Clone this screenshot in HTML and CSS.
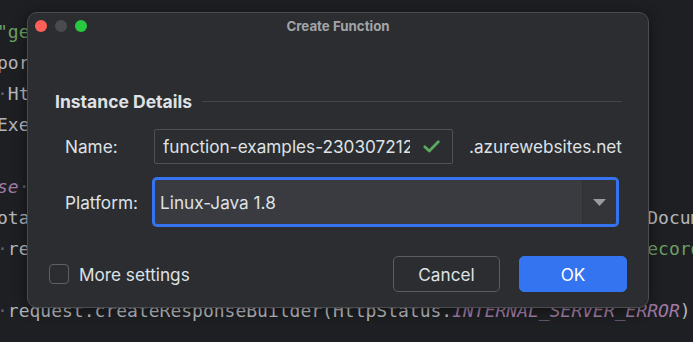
FILE: index.html
```html
<!DOCTYPE html>
<html lang="en">
<head>
<meta charset="utf-8">
<title>Create Function</title>
<link rel="stylesheet" href="styles.css">
</head>
<body>
<div class="editor">
<pre class="code"><span class="str">"get", "post"}, authLevel = AuthorizationLevel.ANONYMOUS)</span>
<span>portRequest&lt;Optional&lt;String&gt;&gt; request,</span>
<span class="ws">·</span><span>HttpRequestMessage&lt;Optional&lt;String&gt;&gt; message,</span>
<span>ExecutionContext context) {</span>

<span class="st">se</span><span class="ws">·</span><span>= false;</span>
<span>otation.process(request, context); final MyItems item = new Document(body);</span>
<span class="ws">·</span><span>request.getQueryParameters().getOrDefault(</span><span class="str">"contentType"</span><span>, </span><span class="str">"Record"</span><span>);</span>

<span class="ws">·</span><span>request.createResponseBuilder(HttpStatus.</span><span class="st">INTERNAL_SERVER_ERROR</span><span>)</span></pre>
</div>

<div class="dialog">
  <div class="titlebar">
    <div class="lights">
      <span class="light red"></span>
      <span class="light gray"></span>
      <span class="light green"></span>
    </div>
    <div class="title">Create Function</div>
  </div>
  <div class="body">
    <div class="section">
      <span class="section-title">Instance Details</span>
      <span class="section-line"></span>
    </div>
    <div class="form">
      <span class="label">Name:</span>
      <div class="name-row">
        <div class="input">
          <span class="input-text">function-examples-230307212</span>
          <svg class="check" width="17" height="13" viewBox="0 0 17 13"><path d="M1.8 6.8 L6.3 11 L15.3 1.8" fill="none" stroke="#5aa95f" stroke-width="2.8" stroke-linecap="round" stroke-linejoin="round"/></svg>
        </div>
        <span class="suffix">.azurewebsites.net</span>
      </div>
      <span class="label">Platform:</span>
      <div class="combo">
        <span class="combo-text">Linux-Java 1.8</span>
        <span class="combo-arrow"><svg width="13" height="7" viewBox="0 0 13 7"><path d="M0 0 H13 L6.5 7 Z" fill="#999ba0"/></svg></span>
      </div>
    </div>
    <div class="footer">
      <div class="more">
        <span class="box"></span>
        <span class="more-text">More settings</span>
      </div>
      <div class="buttons">
        <button class="btn">Cancel</button>
        <button class="btn primary">OK</button>
      </div>
    </div>
  </div>
</div>
</body>
</html>
```

FILE: styles.css
```css
html, body {
  margin: 0;
  padding: 0;
}
body {
  width: 693px;
  height: 342px;
  overflow: hidden;
  position: relative;
  background: #1e1f22;
  font-family: Inter, "Liberation Sans", sans-serif;
}
.editor {
  height: 100%;
  overflow: hidden;
}
.code {
  margin: 0 0 0 -3px;
  padding-top: 16px;
  font-family: "DejaVu Sans Mono", monospace;
  font-size: 18px;
  line-height: 31px;
  color: #b3b6bc;
  white-space: pre;
}
.code .str { color: #6b9f64; }
.code .st { color: #9f7aa3; font-style: italic; }
.code .ws { color: #5d6066; }

.dialog {
  position: absolute;
  left: 27px;
  top: 12px;
  width: 622px;
  height: 296px;
  box-sizing: border-box;
  border: 1px solid #4a4c50;
  border-radius: 10px;
  background: #2b2d30;
  box-shadow: 0 2px 14px rgba(0, 0, 0, 0.45);
  display: flex;
  flex-direction: column;
}
.titlebar {
  height: 26px;
  display: grid;
  grid-template-columns: 1fr auto 1fr;
  align-items: center;
}
.lights {
  display: flex;
  gap: 8px;
  padding-left: 7px;
}
.light {
  width: 12px;
  height: 12px;
  border-radius: 50%;
}
.red { background: #ff5f57; }
.gray { background: #4a4b4e; }
.green { background: #28c840; }
.title {
  font-size: 13.3px;
  font-weight: 700;
  color: #a3a4a8;
}
.body {
  flex: 1;
  display: flex;
  flex-direction: column;
  padding: 52px 21px 15px 21px;
}
.section {
  display: flex;
  align-items: center;
  gap: 10px;
  margin: 0 5px 0 6px;
  height: 20px;
}
.section-title {
  font-size: 17.5px;
  font-weight: 700;
  color: #dfe1e5;
  white-space: nowrap;
}
.section-line {
  flex: 1;
  height: 1px;
  background: #44464a;
}
.form {
  margin: 18px 0 0 16px;
  display: grid;
  grid-template-columns: 89px auto;
  row-gap: 15px;
  align-items: center;
  color: #dfe1e5;
  font-size: 17.2px;
}
.label {
  white-space: nowrap;
}
.name-row {
  display: flex;
  align-items: center;
}
.input {
  width: 299px;
  height: 35px;
  box-sizing: border-box;
  border: 1px solid #4e5157;
  border-radius: 2px;
  display: flex;
  align-items: center;
  padding-left: 8px;
}
.input-text {
  flex: 1;
  overflow: hidden;
  white-space: nowrap;
}
.check {
  margin: 0 12px 0 13px;
  flex: none;
}
.suffix {
  margin-left: 16px;
  white-space: nowrap;
}
.combo {
  width: 463px;
  height: 46px;
  box-sizing: border-box;
  border: 1px solid #3574f0;
  box-shadow: 0 0 0 2px #3574f0;
  border-radius: 3px;
  background: #393b40;
  display: flex;
  align-items: stretch;
  overflow: hidden;
}
.combo-text {
  flex: 1;
  display: flex;
  align-items: center;
  padding-left: 5px;
}
.combo-arrow {
  width: 33px;
  border-left: 1px solid #2e3033;
  background: #333539;
  display: flex;
  align-items: center;
  justify-content: center;
}
.footer {
  margin-top: auto;
  display: flex;
  align-items: center;
  justify-content: space-between;
}
.more {
  display: flex;
  align-items: center;
  gap: 10px;
  font-size: 17.2px;
  color: #dfe1e5;
}
.box {
  width: 20px;
  height: 20px;
  box-sizing: border-box;
  border: 1px solid #5d6066;
  border-radius: 4px;
}
.buttons {
  display: flex;
  gap: 19px;
}
.btn {
  width: 107px;
  height: 36px;
  box-sizing: border-box;
  border: 1px solid #5a5d63;
  border-radius: 5px;
  background: transparent;
  color: #dfe1e5;
  font-family: Inter, "Liberation Sans", sans-serif;
  font-size: 17.2px;
  padding: 0;
}
.btn.primary {
  width: 108px;
  background: #3574f0;
  border-color: #3574f0;
  color: #ffffff;
}
```
